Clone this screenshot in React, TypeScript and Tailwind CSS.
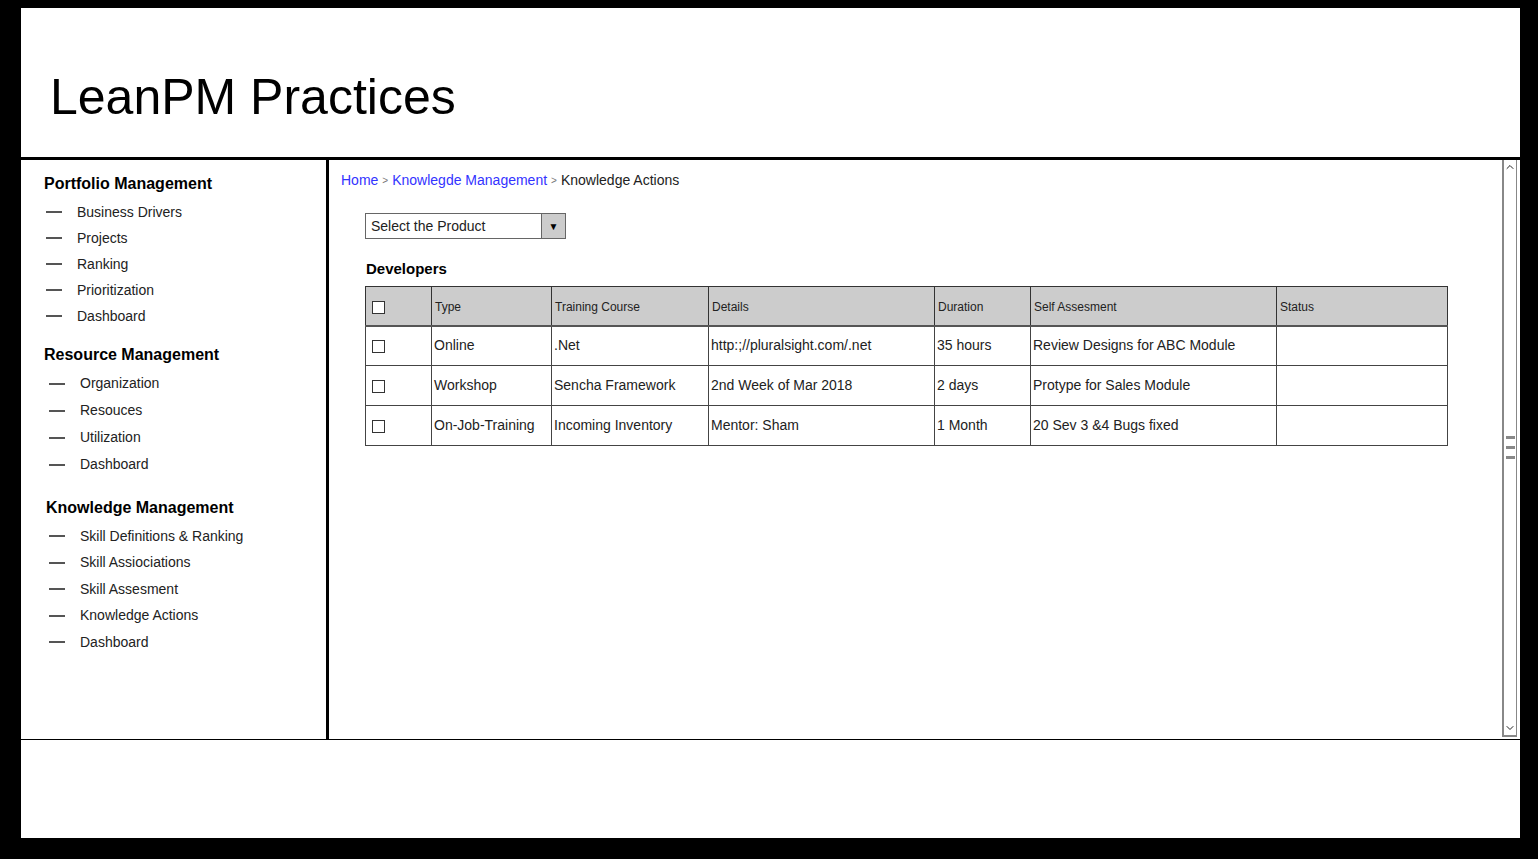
import { ChevronUp, ChevronDown } from "lucide-react";

const hand = "font-['Liberation_Sans',Arial,sans-serif]";

type Section = {
    title: string;
    items: string[];
    wrap: string;
    head: string;
    dash: string;
    text: string;
    row: string;
};

const sections: Section[] = [
    {
        title: "Portfolio Management",
        items: ["Business Drivers", "Projects", "Ranking", "Prioritization", "Dashboard"],
        wrap: "pt-[14px]",
        head: "pl-[23px]",
        dash: "ml-[25px]",
        text: "ml-[15px]",
        row: "h-[26px]",
    },
    {
        title: "Resource Management",
        items: ["Organization", "Resouces", "Utilization", "Dashboard"],
        wrap: "pt-[16px]",
        head: "pl-[23px]",
        dash: "ml-[28px]",
        text: "ml-[15px]",
        row: "h-[27px]",
    },
    {
        title: "Knowledge Management",
        items: ["Skill Definitions & Ranking", "Skill Assiociations", "Skill Assesment", "Knowledge Actions", "Dashboard"],
        wrap: "pt-[20px]",
        head: "pl-[25px]",
        dash: "ml-[28px]",
        text: "ml-[15px]",
        row: "h-[26.5px]",
    },
];

const columns = [
    { label: "", width: "w-[66px]" },
    { label: "Type", width: "w-[120px]" },
    { label: "Training Course", width: "w-[157px]" },
    { label: "Details", width: "w-[226px]" },
    { label: "Duration", width: "w-[96px]" },
    { label: "Self Assesment", width: "w-[246px]" },
    { label: "Status", width: "w-[171px]" },
];

const rows = [
    ["Online", ".Net", "http:;//pluralsight.com/.net", "35 hours", "Review Designs for ABC Module", ""],
    ["Workshop", "Sencha Framework", "2nd Week of Mar 2018", "2 days", "Protype for Sales Module", ""],
    ["On-Job-Training", "Incoming Inventory", "Mentor: Sham", "1 Month", "20 Sev 3 &4 Bugs fixed", ""],
];

function Checkbox() {
    return <span className="block w-[13px] h-[13px] border border-[#333] bg-white" />;
}

function Sidebar() {
    return (
        <aside className={`w-[308px] shrink-0 border-r-[3px] border-black text-[#222] ${hand}`}>
            {sections.map((s) => (
                <div key={s.title} className={s.wrap}>
                    <h3 className={`${s.head} h-[20px] leading-[20px] text-[16px] font-bold text-black`}>{s.title}</h3>
                    <ul className="mt-[5px]">
                        {s.items.map((item, i) => (
                            <li key={i} className={`flex items-center ${s.row}`}>
                                <span className={`${s.dash} w-[16px] h-[2px] bg-[#555]`} />
                                <span className={`${s.text} text-[14px]`}>{item}</span>
                            </li>
                        ))}
                    </ul>
                </div>
            ))}
        </aside>
    );
}

function Scrollbar() {
    return (
        <div className="w-[15px] shrink-0 mr-[3px] mb-[2px] border-l-2 border-r border-b-2 border-[#888] bg-white flex flex-col items-center justify-between">
            <ChevronUp className="w-[12px] h-[12px] text-[#222] mt-[1px]" strokeWidth={2} />
            <div className="flex flex-col gap-[7px]">
                <span className="block w-[9px] h-[3px] bg-[#888]" />
                <span className="block w-[9px] h-[3px] bg-[#888]" />
                <span className="block w-[9px] h-[3px] bg-[#888]" />
            </div>
            <ChevronDown className="w-[12px] h-[12px] text-[#222] mb-[1px]" strokeWidth={2} />
        </div>
    );
}

function Content() {
    return (
        <section className={`flex-1 flex ${hand}`}>
            <div className="flex-1 pt-[11px]">
                {/* breadcrumb */}
                <div className="pl-[12px] flex items-center h-[18px] text-[14px]">
                    <span className="text-[#3333ff]">Home</span>
                    <span className="mx-[4px] text-[10px] text-[#777]">&gt;</span>
                    <span className="text-[#3333ff]">Knowlegde Management</span>
                    <span className="mx-[4px] text-[10px] text-[#777]">&gt;</span>
                    <span className="text-[#222]">Knowledge Actions</span>
                </div>

                <div className="pl-[36px]">
                    {/* product select */}
                    <div className="mt-[24px] w-[201px] h-[26px] flex border border-[#666] bg-white">
                        <span className="flex-1 pl-[5px] text-[14px] leading-[24px] text-[#222]">Select the Product</span>
                        <span className="w-[24px] bg-[#cccccc] border-l border-[#666] flex items-center justify-center text-[10px] text-black">▼</span>
                    </div>

                    <h4 className="mt-[20px] pl-[1px] h-[20px] leading-[20px] text-[15px] font-bold text-black">Developers</h4>

                    <table className="mt-[7px] border-collapse border border-[#222] table-fixed w-[1082px]">
                        <thead>
                            <tr className="bg-[#cccccc] h-[39px]">
                                {columns.map((c, i) => (
                                    <th
                                        key={i}
                                        className={`${c.width} border border-[#333] border-b-2 border-b-[#555] px-[3px] pt-[2px] text-left text-[12px] font-normal text-[#222]`}
                                    >
                                        {i === 0 ? <span className="ml-[3px] inline-block align-middle"><Checkbox /></span> : c.label}
                                    </th>
                                ))}
                            </tr>
                        </thead>
                        <tbody>
                            {rows.map((r, ri) => (
                                <tr key={ri} className="h-[40px] bg-white">
                                    <td className="border border-[#444] px-[3px]">
                                        <span className="ml-[3px] inline-block align-middle"><Checkbox /></span>
                                    </td>
                                    {r.map((cell, ci) => (
                                        <td key={ci} className="border border-[#444] px-[2px] text-[14px] text-[#222] whitespace-nowrap">
                                            {cell}
                                        </td>
                                    ))}
                                </tr>
                            ))}
                        </tbody>
                    </table>
                </div>
            </div>
            <Scrollbar />
        </section>
    );
}

export default function App() {
    return (
        <div className="h-[859px] bg-black pt-[8px] pl-[21px] pr-[18px] pb-[21px]">
            <div className="h-full bg-white flex flex-col">
                <header className="h-[149px] shrink-0 flex items-end pb-[35px] pl-[29px]">
                    <h1 className="text-[50px] leading-none text-black font-['Liberation_Sans',Arial,sans-serif]">LeanPM Practices</h1>
                </header>
                <div className="h-[3px] bg-black shrink-0" />
                <main className="h-[579px] shrink-0 flex">
                    <Sidebar />
                    <Content />
                </main>
                <div className="h-px bg-black shrink-0" />
                <footer className="flex-1" />
            </div>
        </div>
    );
}
